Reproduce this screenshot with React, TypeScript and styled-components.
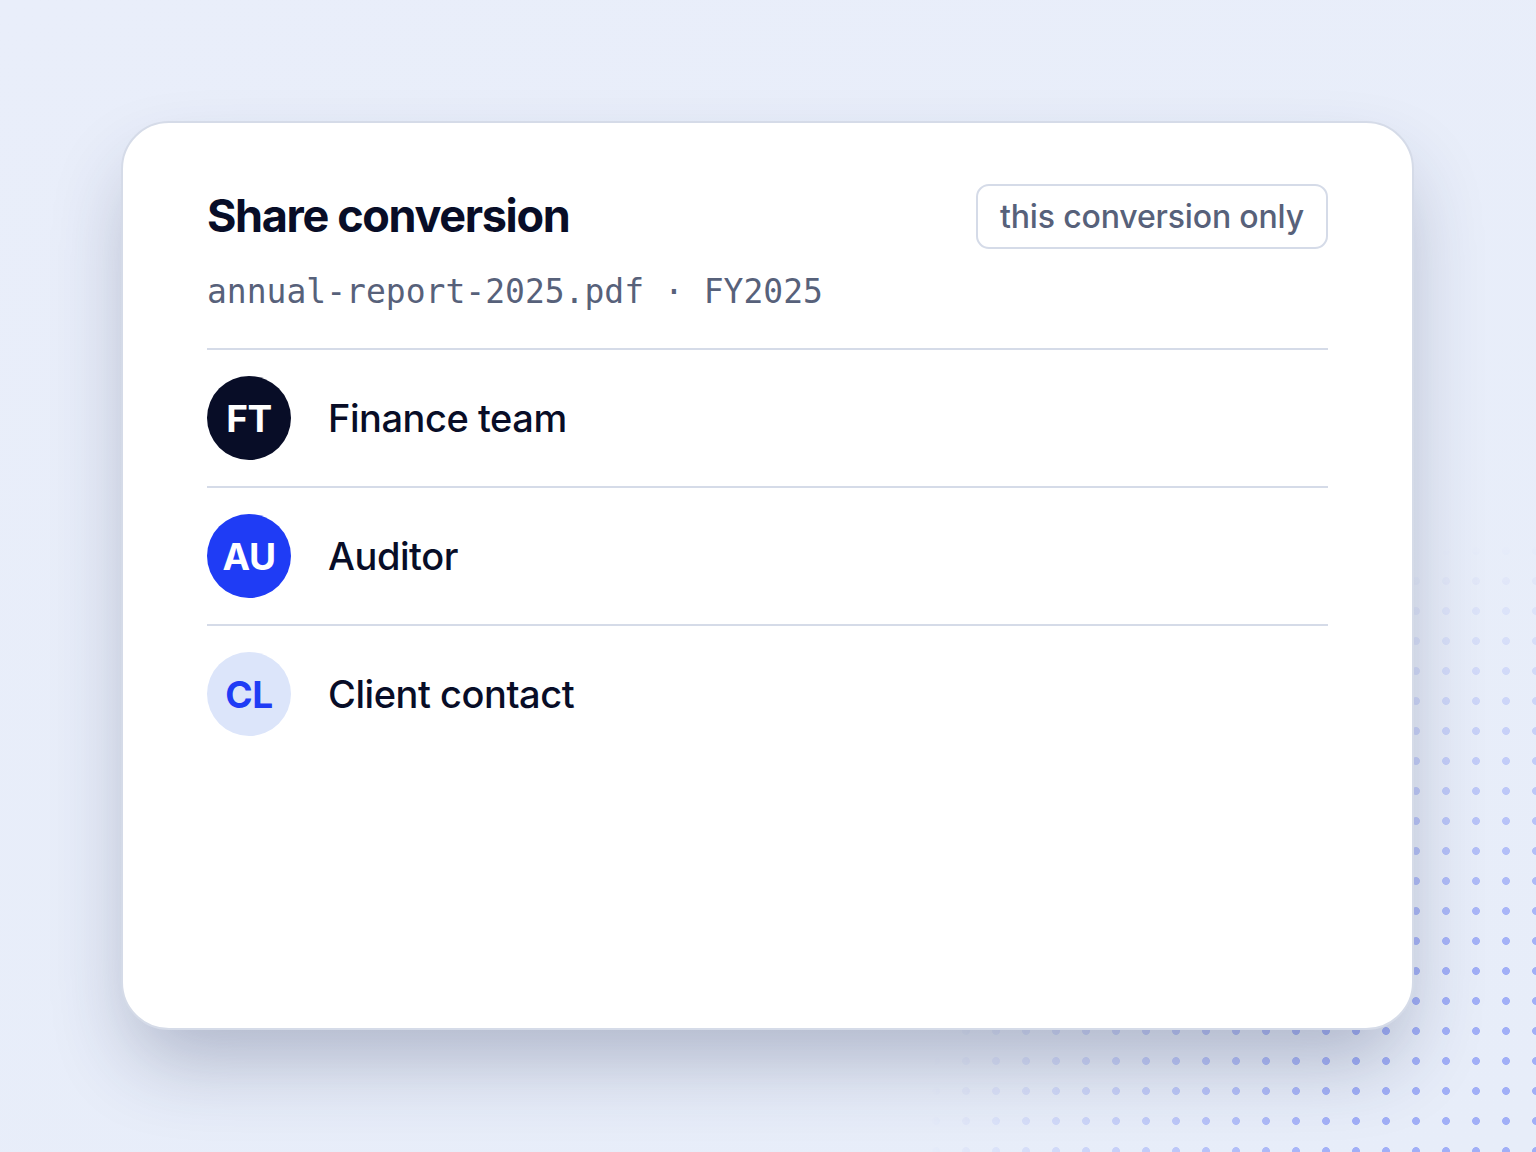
import React from 'react';
import styled, { createGlobalStyle } from 'styled-components';

const colors = {
  page: '#e8eefa',
  ink: '#080d27',
  slate: '#57617a',
  line: '#d5dbe8',
  blue: '#1f3cf5',
  blueSoft: '#dce5fa',
  white: '#ffffff',
};

type Tone = 'dark' | 'blue' | 'soft';

interface Recipient {
  initials: string;
  name: string;
  tone: Tone;
}

const recipients: Recipient[] = [
  { initials: 'FT', name: 'Finance team', tone: 'dark' },
  { initials: 'AU', name: 'Auditor', tone: 'blue' },
  { initials: 'CL', name: 'Client contact', tone: 'soft' },
];

const App = () => (
  <Page>
    <GlobalStyle />
    <DotField />
    <Card>
      <Header>
        <Title>Share conversion</Title>
        <ScopeTag>this conversion only</ScopeTag>
      </Header>
      <FileMeta>annual-report-2025.pdf · FY2025</FileMeta>
      <List>
        {recipients.map(r => (
          <Row key={r.initials}>
            <Avatar tone={r.tone}>{r.initials}</Avatar>
            <Name>{r.name}</Name>
          </Row>
        ))}
      </List>
    </Card>
  </Page>
);

const GlobalStyle = createGlobalStyle`
  html, body {
    margin: 0;
    padding: 0;
    background: ${colors.page};
  }

  * {
    box-sizing: border-box;
  }
`;

const Page = styled.main`
  position: relative;
  display: flex;
  height: 100vh;
  padding: 121px 122px 122px 121px;
  overflow: hidden;
  background: linear-gradient(160deg, #e9eefa 0%, #e7edf9 100%);
  font-family: Inter, 'Noto Sans', sans-serif;
`;

// dotted decoration fading out from the bottom-right corner
const DotField = styled.div`
  position: absolute;
  right: 0;
  bottom: 0;
  width: 630px;
  height: 630px;
  background-image: radial-gradient(circle, #a1aff7 3.6px, transparent 4.2px);
  background-size: 30px 30px;
  background-position: 15px 14px;
  mask-image: radial-gradient(circle at 100% 100%, #000 200px, transparent 610px);
  -webkit-mask-image: radial-gradient(circle at 100% 100%, #000 200px, transparent 610px);
`;

const Card = styled.section`
  position: relative;
  z-index: 1;
  flex: 1;
  display: flex;
  flex-direction: column;
  padding: 58px 84px 0 84px;
  background: ${colors.white};
  border: 2px solid ${colors.line};
  border-radius: 48px;
  box-shadow: 0 40px 80px -12px rgba(35, 46, 86, 0.3);
`;

const Header = styled.div`
  display: flex;
  align-items: center;
  justify-content: space-between;
`;

const Title = styled.h1`
  margin: 0;
  font-size: 45px;
  font-weight: 700;
  letter-spacing: -0.03em;
  line-height: 70px;
  color: ${colors.ink};
`;

const ScopeTag = styled.span`
  display: inline-flex;
  align-items: center;
  height: 65px;
  padding: 0 22px;
  border: 2px solid ${colors.line};
  border-radius: 13px;
  font-size: 32px;
  font-weight: 500;
  letter-spacing: -0.005em;
  color: ${colors.slate};
`;

const FileMeta = styled.div`
  margin-top: 21px;
  font-family: 'DejaVu Sans Mono', 'Liberation Mono', monospace;
  font-size: 33px;
  line-height: 40px;
  color: ${colors.slate};
`;

const List = styled.ul`
  list-style: none;
  margin: 36px 0 0;
  padding: 0;
`;

const Row = styled.li`
  display: flex;
  align-items: center;
  gap: 37px;
  padding: 26px 0;
  border-top: 2px solid ${colors.line};

  &:last-child {
    padding-bottom: 0;
  }
`;

const avatarTones: Record<Tone, { bg: string; fg: string }> = {
  dark: { bg: colors.ink, fg: colors.white },
  blue: { bg: colors.blue, fg: colors.white },
  soft: { bg: colors.blueSoft, fg: colors.blue },
};

const Avatar = styled.div<{ tone: Tone }>`
  display: flex;
  align-items: center;
  justify-content: center;
  flex: none;
  width: 84px;
  height: 84px;
  border-radius: 50%;
  background: ${p => avatarTones[p.tone].bg};
  color: ${p => avatarTones[p.tone].fg};
  font-size: 37px;
  font-weight: 700;
  letter-spacing: -0.01em;
`;

const Name = styled.span`
  font-size: 38px;
  font-weight: 500;
  letter-spacing: -0.012em;
  color: ${colors.ink};
`;

export default App;
